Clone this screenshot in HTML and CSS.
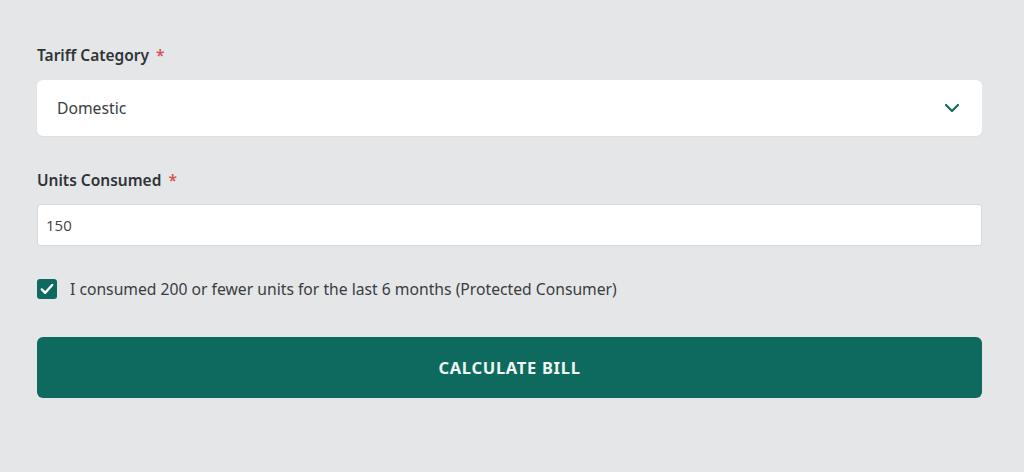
FILE: index.html
```html
<!DOCTYPE html>
<html lang="en">

<head>
    <meta charset="UTF-8">
    <meta name="viewport" content="width=device-width, initial-scale=1.0">
    <title>Electricity Bill Calculator</title>
    <link rel="stylesheet" href="styles.css">
</head>

<body>
    <form class="bill-form" id="billForm">
        <div class="field">
            <label class="field-label" for="tariff">Tariff Category <span class="req">*</span></label>
            <div class="select-wrap">
                <select id="tariff" class="select">
                    <option>Domestic</option>
                    <option>Commercial</option>
                    <option>Industrial</option>
                </select>
                <svg class="chevron" width="16" height="10" viewBox="0 0 16 10" aria-hidden="true">
                    <path d="M2 2l6 6 6-6" fill="none" stroke="#136b5c" stroke-width="2.2" stroke-linecap="round" stroke-linejoin="round"/>
                </svg>
            </div>
        </div>
        <div class="field">
            <label class="field-label" for="units">Units Consumed <span class="req">*</span></label>
            <input type="number" id="units" class="input" value="150" min="0">
        </div>
        <label class="check-row">
            <input type="checkbox" class="check" checked>
            <span class="check-box">
                <svg width="14" height="12" viewBox="0 0 14 12" aria-hidden="true">
                    <path d="M1.8 6.4l3.4 3.4L12.2 2" fill="none" stroke="#fff" stroke-width="2.4" stroke-linecap="round" stroke-linejoin="round"/>
                </svg>
            </span>
            <span class="check-text">I consumed 200 or fewer units for the last 6 months (Protected Consumer)</span>
        </label>
        <button type="submit" class="btn">CALCULATE BILL</button>
    </form>
</body>

</html>
```

FILE: styles.css
```css
:root {
    --bg-color: #e5e6e8;
    --text-color: #333;
    --label-color: #2f3337;
    --field-bg: #fff;
    --field-border: #d6d8db;
    --accent: #0e6a5e;
    --req: #d9534f;
}

body {
    font-family: "Noto Sans", "Open Sans", sans-serif;
    margin: 0;
    padding: 0;
    background-color: var(--bg-color);
    color: var(--text-color);
}

.bill-form {
    padding: 44px 42px 0 37px;
    display: flex;
    flex-direction: column;
}

.field {
    display: flex;
    flex-direction: column;
}

.field-label {
    font-size: 15.5px;
    font-weight: 600;
    color: var(--label-color);
    line-height: 22px;
}

.req {
    color: var(--req);
    margin-left: 3px;
}

.select-wrap {
    position: relative;
    margin-top: 14px;
    margin-bottom: 33px;
}

.select {
    appearance: none;
    width: 100%;
    height: 56px;
    border: none;
    border-radius: 6px;
    background-color: var(--field-bg);
    padding: 0 20px;
    font-family: inherit;
    font-size: 15.7px;
    color: #3a3d40;
    box-shadow: 0 1px 2px rgba(0, 0, 0, 0.04);
}

.chevron {
    position: absolute;
    right: 22px;
    top: 23px;
    pointer-events: none;
}

.input {
    margin-top: 13px;
    height: 42px;
    width: 100%;
    box-sizing: border-box;
    border: 1px solid var(--field-border);
    border-radius: 3px;
    background-color: var(--field-bg);
    padding: 0 8px;
    font-family: "Open Sans", sans-serif;
    font-size: 15px;
    color: #444;
}

.input::-webkit-inner-spin-button,
.input::-webkit-outer-spin-button {
    -webkit-appearance: none;
    margin: 0;
}

.check-row {
    display: flex;
    align-items: center;
    gap: 13px;
    margin-top: 32px;
    cursor: pointer;
}

.check {
    display: none;
}

.check-box {
    width: 20px;
    height: 20px;
    border-radius: 3px;
    background-color: var(--accent);
    display: flex;
    align-items: center;
    justify-content: center;
}

.check-text {
    font-size: 15.7px;
    color: #3a3d40;
}

.btn {
    margin-top: 37px;
    height: 61px;
    width: 100%;
    border: none;
    border-radius: 6px;
    background-color: var(--accent);
    color: #eef6f4;
    font-family: inherit;
    font-size: 16.5px;
    font-weight: 700;
    letter-spacing: 0.7px;
    cursor: pointer;
}
```
